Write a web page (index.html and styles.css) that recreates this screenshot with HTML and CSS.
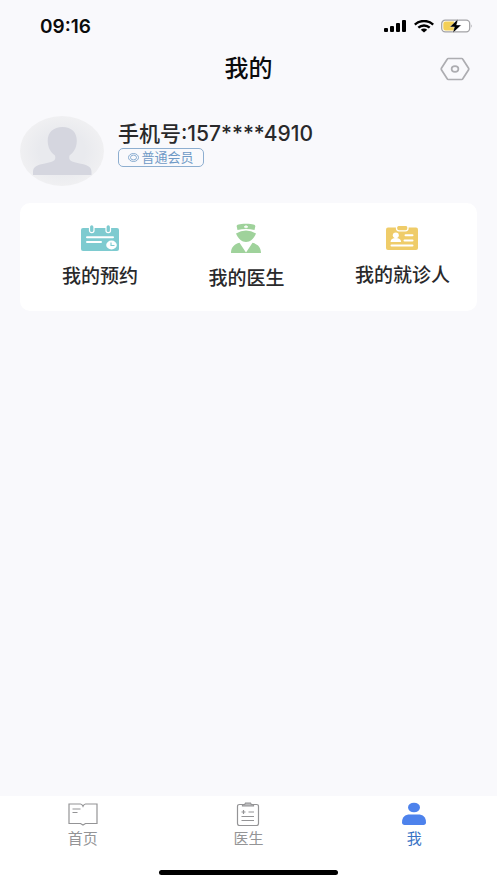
FILE: index.html
```html
<!DOCTYPE html>
<html lang="zh-CN">
<head>
<meta charset="utf-8">
<meta name="viewport" content="width=device-width, initial-scale=1">
<title>我的</title>
<link rel="stylesheet" href="styles.css">
</head>
<body>
<div class="status">
  <time class="clock">09:16</time>
  <div class="indicators">
    <svg width="23" height="13" viewBox="0 0 23 13" aria-hidden="true"><rect x="0" y="8" width="4" height="4" rx="1"/><rect x="6" y="6" width="4" height="6" rx="1"/><rect x="12" y="3" width="4" height="9" rx="1"/><rect x="18" y="0" width="4" height="12" rx="1"/></svg>
    <svg width="20" height="13" viewBox="0 0 20 13" aria-hidden="true"><g fill="none" stroke="#000" stroke-width="2.4"><path d="M.8 4.6C6-.2 14-.2 19.2 4.6"/><path d="M4.3 7.7c3.3-3 8.100-3 11.400 0"/></g><path d="M6.800 9.700c1.900-1.500 4.500-1.500 6.400 0L10 12.600z"/></svg>
    <svg class="battery" width="32" height="14" viewBox="0 0 32 14" aria-hidden="true"><rect x=".7" y="1.200" width="28" height="11.600" rx="3.500" fill="#fff" stroke="#a3a3a6" stroke-width="1.300"/><path d="M4.500 2.500H13v9H4.500a2.200 2.200 0 0 1-2.200-2.200V4.700a2.200 2.200 0 0 1 2.200-2.200z" fill="#f3cf56"/><path d="M30.300 5.200q1.500 1.800 0 3.600z" fill="#a3a3a6"/><path d="M17 0 8.800 7.900h4.600L11.800 14 20.300 6h-4.700z" stroke="#f9f9fc" stroke-width=".4"/></svg>
  </div>
</div>
<header class="header">
  <h1>我的</h1>
  <button class="settings" type="button" aria-label="设置">
    <svg width="30" height="24" viewBox="0 0 30 24" fill="none" stroke="#adadb1" stroke-width="1.700" stroke-linejoin="round" aria-hidden="true"><path d="M8.300 1.500h13.400q.7 0 1.100.7l5.800 9q.4.800 0 1.600l-5.800 9q-.4.700-1.100.7H8.300q-.7 0-1.100-.7l-5.800-9q-.4-.8 0-1.600l5.800-9q.4-.7 1.100-.7z"/><ellipse cx="15" cy="12" rx="3.400" ry="2.800"/></svg>
  </button>
</header>
<main>
  <section class="profile">
    <svg class="avatar" width="84" height="70" viewBox="0 0 84 70" role="img" aria-label="头像">
      <defs><radialGradient id="disc"><stop offset=".55" stop-color="#e9eaee"/><stop offset="1" stop-color="#f0f0f2"/></radialGradient></defs>
      <ellipse cx="42" cy="35" rx="42" ry="35" fill="url(#disc)"/>
      <path d="M42.500 11c-9 0-15 5.500-14.800 14 .1 7 3.300 11.700 7.300 14.500 1.500 5.500-2.500 6.300-8 7.500C18 48.800 13 50 13 56v3h58.500v-3c0-6-5-7.200-14-9-5.500-1.200-9.500-2-8-7.500 4-2.800 7.200-7.500 7.300-14.500.2-8.500-5.300-14-14.300-14z" fill="#d5d6df"/>
    </svg>
    <div class="identity">
      <p class="phone">手机号:157****4910</p>
      <span class="badge"><svg width="11" height="9" viewBox="0 0 11 9" fill="none" stroke="currentColor" stroke-width=".8" aria-hidden="true"><ellipse cx="5.500" cy="4.500" rx="5" ry="4"/><ellipse cx="5.500" cy="4.500" rx="3" ry="2.400"/></svg>普通会员</span>
    </div>
  </section>
  <nav class="card" aria-label="我的服务">
    <a class="entry" href="#appointments">
      <svg width="38" height="26" viewBox="0 0 38 26" aria-hidden="true"><rect y="3" width="38" height="23" rx="2" fill="#7ecbd0"/><g fill="#7ecbd0" stroke="#fff" stroke-width="1.200"><rect x="8.500" y="-.3" width="4.500" height="8" rx="2.200"/><rect x="25" y="-.3" width="4.500" height="8" rx="2.200"/></g><path d="M6 12.200h26M6 17h14" stroke="#fff" stroke-width="2" stroke-linecap="round"/><ellipse cx="30.500" cy="20" rx="5.300" ry="4.400" fill="#fff"/><path d="M30 17.500v3h3.500" fill="none" stroke="#7ecbd0" stroke-width="1.100"/></svg>
      <span>我的预约</span>
    </a>
    <a class="entry" href="#doctors">
      <svg width="30" height="30" viewBox="0 0 30 30" aria-hidden="true"><g fill="#9fd29b"><path d="M6.500 7 5.700 3.500C5.400 1.500 8 1 15 .8c7 .2 9.600.7 9.300 2.700L23.500 7Q15 5 6.500 7z"/><path d="M5 10.500Q15 4.500 25 10.500c-2 5-6 8.500-10 8.500s-8-3.500-10-8.500z"/><path d="M0 30c0-6 3.500-9 8.500-10.300L15 29.500l6.500-9.800C26.500 21 30 24 30 30z"/></g><path d="M15 2.300v3M13 3.800h4" stroke="#fff" stroke-width="1.200"/></svg>
      <span>我的医生</span>
    </a>
    <a class="entry" href="#patients">
      <svg width="32" height="24" viewBox="0 0 32 24" aria-hidden="true"><rect y="1.500" width="32" height="22.500" rx="2" fill="#efcc69"/><rect x="10.500" y="-.7" width="11.500" height="5.500" rx="2.500" fill="#efcc69" stroke="#fff" stroke-width="1.300"/><g fill="#fff"><ellipse cx="9.800" cy="9.300" rx="3" ry="2.800"/><path d="M4.500 16c.3-3 2-4 5.300-4s5 1 5.300 4z"/></g><path d="M19.500 9.300h7M18.500 14.500h8M5.500 19.500h21" stroke="#fff" stroke-width="2" stroke-linecap="round"/></svg>
      <span>我的就诊人</span>
    </a>
  </nav>
</main>
<footer class="footer">
  <nav class="tabs" aria-label="主导航">
    <a class="tab" href="#home">
      <svg width="30" height="24" viewBox="0 0 30 24" fill="none" stroke="#949496" stroke-width="1.200" aria-hidden="true"><path d="M1 2h11.500q1.500 0 2.500 2.300Q16 2 17.500 2H29v19.500H17.500L15 23l-2.500-1.500H1z"/><path d="M4.500 7h8M4.500 10.500h5"/></svg>
      <span>首页</span>
    </a>
    <a class="tab" href="#doctor">
      <svg width="24" height="24" viewBox="0 0 24 24" fill="none" stroke="#949496" stroke-width="1.200" aria-hidden="true"><path d="M6.500 2.500h-3q-2 0-2 2v17q0 2 2 2h17q2 0 2-2v-17q0-2-2-2h-3"/><path d="M6.500 4V2.500h2.200L9.500 1h5l.8 1.500h2.200V4z" fill="#bcbcbe"/><path d="M5.500 10h4M7.500 8v4M12.500 10H18M5.500 14.500H18M5.500 18.500H18"/></svg>
      <span>医生</span>
    </a>
    <a class="tab active" href="#me" aria-current="page">
      <svg width="24" height="24" viewBox="0 0 24 24" fill="#4d82ec" aria-hidden="true"><ellipse cx="12" cy="5.500" rx="6" ry="4.800"/><path d="M0 20.500C0 15 3 12.500 8 12.500h8c5 0 8 2.500 8 8 0 1.600-1 2.500-2.500 2.500h-19C1 23 0 22.100 0 20.500z"/></svg>
      <span>我</span>
    </a>
  </nav>
  <div class="home-bar"></div>
</footer>
</body>
</html>
```
FILE: styles.css
```css
* { box-sizing: border-box; }

body {
  margin: 0;
  min-height: 100vh;
  display: flex;
  flex-direction: column;
  background: #f9f9fc;
  color: #29292b;
  font-family: Inter, "Noto Sans CJK SC", sans-serif;
}

h1, p { margin: 0; }
a { color: inherit; text-decoration: none; }
svg { display: block; flex: none; }

.status {
  height: 52px;
  padding: 0 24px 0 40px;
  display: flex;
  align-items: center;
  justify-content: space-between;
}
.clock {
  color: #0b0b0c;
  font-size: 19px;
  font-weight: 600;
}
.indicators {
  display: flex;
  align-items: center;
  gap: 7px;
}

.header {
  height: 34px;
  padding: 0 27px;
  display: grid;
  grid-template-columns: 1fr auto 1fr;
  align-items: center;
}
.header h1 {
  grid-column: 2;
  color: #0b0b0c;
  font-size: 24px;
  line-height: 34px;
  font-weight: 500;
}
.settings {
  justify-self: end;
  padding: 0;
  border: 0;
  background: none;
}

main {
  flex: 1;
  padding: 30px 20px;
}
.profile {
  display: flex;
  gap: 14px;
}
.identity {
  padding-top: 4px;
}
.phone {
  font-size: 21px;
  line-height: 28px;
  font-weight: 500;
}
.badge {
  width: 86px;
  height: 19px;
  display: flex;
  align-items: center;
  justify-content: center;
  gap: 2px;
  border: 1px solid #8daed0;
  border-radius: 5px;
  color: #6f9ac6;
  font-size: 13px;
  line-height: 17px;
}

.card {
  min-height: 108px;
  margin-top: 17px;
  padding: 20px 27px 20px 42px;
  display: flex;
  align-items: center;
  justify-content: space-between;
  border-radius: 10px;
  background: #fff;
}
.entry {
  display: flex;
  flex-direction: column;
  align-items: center;
  gap: 13px;
  font-size: 19px;
  line-height: 25px;
  font-weight: 500;
}

.footer {
  background: #fff;
}
.tabs {
  padding: 6px 0 20px;
  display: grid;
  grid-template-columns: repeat(3, 1fr);
}
.tab {
  display: flex;
  flex-direction: column;
  align-items: center;
  gap: 2px;
  color: #949496;
  font-size: 15px;
  line-height: 22px;
}
.tab.active { color: #3973c5; }
.home-bar {
  width: 36%;
  height: 5px;
  margin: 0 auto 8px;
  border-radius: 3px;
  background: #000;
}
```
